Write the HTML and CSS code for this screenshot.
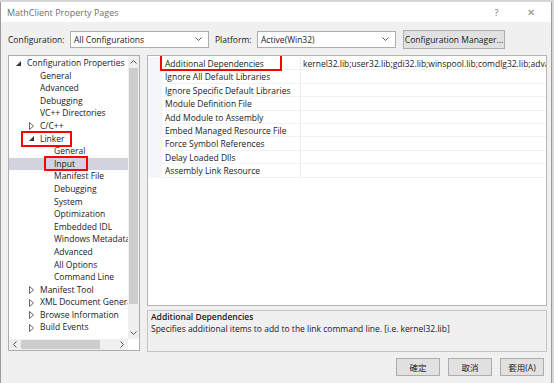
FILE: index.html
```html
<!DOCTYPE html>
<html lang="en">

<head>
    <meta charset="UTF-8">
    <meta name="viewport" content="width=device-width, initial-scale=1.0">
    <title>MathClient Property Pages</title>
    <link rel="stylesheet" href="styles.css">
</head>

<body>
    <div class="desk"></div>
    <div class="window">
        <div class="titlebar">
            <span class="title">MathClient Property Pages</span>
            <span class="help">?</span>
            <span class="close">✕</span>
        </div>

        <div class="config-row">
            <span class="label label-config">Configuration:</span>
            <div class="select">
                <span>All Configurations</span>
                <svg class="chevron" width="7" height="4" viewBox="0 0 7 4"><path d="M0.5 0.5 L3.5 3.5 L6.5 0.5" fill="none" stroke="#444" stroke-width="0.9"/></svg>
            </div>
            <span class="label label-platform">Platform:</span>
            <div class="select">
                <span>Active(Win32)</span>
                <svg class="chevron" width="7" height="4" viewBox="0 0 7 4"><path d="M0.5 0.5 L3.5 3.5 L6.5 0.5" fill="none" stroke="#444" stroke-width="0.9"/></svg>
            </div>
            <button class="btn btn-manager">Configuration Manager...</button>
        </div>

        <div class="main">
            <div class="tree">
                <div class="tree-top">
                    <ul class="tree-list">
                        <li class="lvl0"><span class="exp"><svg width="5" height="5" viewBox="0 0 5 5"><polygon points="5,0 5,5 0,5" fill="#333"/></svg></span>Configuration Properties</li>
                        <li class="lvl1"><span class="exp"></span>General</li>
                        <li class="lvl1"><span class="exp"></span>Advanced</li>
                        <li class="lvl1"><span class="exp"></span>Debugging</li>
                        <li class="lvl1"><span class="exp"></span>VC++ Directories</li>
                        <li class="lvl1"><span class="exp"><svg width="5" height="8" viewBox="0 0 5 8"><polygon points="0.5,0.5 4.5,4 0.5,7.5" fill="none" stroke="#555" stroke-width="0.9"/></svg></span>C/C++</li>
                        <li class="lvl1"><span class="mark mark-linker"><span class="exp"><svg width="5" height="5" viewBox="0 0 5 5"><polygon points="5,0 5,5 0,5" fill="#333"/></svg></span>Linker</span></li>
                        <li class="lvl2"><span class="exp"></span>General</li>
                        <li class="lvl2 selected"><span class="exp"></span><span class="mark mark-input">Input</span></li>
                        <li class="lvl2"><span class="exp"></span>Manifest File</li>
                        <li class="lvl2"><span class="exp"></span>Debugging</li>
                        <li class="lvl2"><span class="exp"></span>System</li>
                        <li class="lvl2"><span class="exp"></span>Optimization</li>
                        <li class="lvl2"><span class="exp"></span>Embedded IDL</li>
                        <li class="lvl2"><span class="exp"></span>Windows Metadata</li>
                        <li class="lvl2"><span class="exp"></span>Advanced</li>
                        <li class="lvl2"><span class="exp"></span>All Options</li>
                        <li class="lvl2"><span class="exp"></span>Command Line</li>
                        <li class="lvl1"><span class="exp"><svg width="5" height="8" viewBox="0 0 5 8"><polygon points="0.5,0.5 4.5,4 0.5,7.5" fill="none" stroke="#555" stroke-width="0.9"/></svg></span>Manifest Tool</li>
                        <li class="lvl1"><span class="exp"><svg width="5" height="8" viewBox="0 0 5 8"><polygon points="0.5,0.5 4.5,4 0.5,7.5" fill="none" stroke="#555" stroke-width="0.9"/></svg></span>XML Document Generator</li>
                        <li class="lvl1"><span class="exp"><svg width="5" height="8" viewBox="0 0 5 8"><polygon points="0.5,0.5 4.5,4 0.5,7.5" fill="none" stroke="#555" stroke-width="0.9"/></svg></span>Browse Information</li>
                        <li class="lvl1"><span class="exp"><svg width="5" height="8" viewBox="0 0 5 8"><polygon points="0.5,0.5 4.5,4 0.5,7.5" fill="none" stroke="#555" stroke-width="0.9"/></svg></span>Build Events</li>
                    </ul>
                    <div class="vscroll">
                        <div class="arrow"><svg width="7" height="4" viewBox="0 0 7 4"><path d="M0.5 3.5 L3.5 0.5 L6.5 3.5" fill="none" stroke="#555" stroke-width="1"/></svg></div>
                        <div class="vthumb"></div>
                        <div class="vtrack"></div>
                        <div class="arrow"><svg width="7" height="4" viewBox="0 0 7 4"><path d="M0.5 0.5 L3.5 3.5 L6.5 0.5" fill="none" stroke="#555" stroke-width="1"/></svg></div>
                    </div>
                </div>
                <div class="hscroll">
                    <div class="harrow"><svg width="4" height="7" viewBox="0 0 4 7"><path d="M3.5 0.5 L0.5 3.5 L3.5 6.5" fill="none" stroke="#555" stroke-width="1"/></svg></div>
                    <div class="hthumb"></div>
                    <div class="htrack"></div>
                    <div class="harrow"><svg width="4" height="7" viewBox="0 0 4 7"><path d="M0.5 0.5 L3.5 3.5 L0.5 6.5" fill="none" stroke="#555" stroke-width="1"/></svg></div>
                    <div class="corner"></div>
                </div>
            </div>

            <div class="right">
                <div class="grid">
                    <div class="prop">
                        <span class="gutter"></span>
                        <span class="name"><span class="mark mark-dep">Additional Dependencies</span></span>
                        <span class="value">kernel32.lib;user32.lib;gdi32.lib;winspool.lib;comdlg32.lib;advapi32.lib;shell32.lib</span>
                    </div>
                    <div class="prop"><span class="gutter"></span><span class="name">Ignore All Default Libraries</span><span class="value"></span></div>
                    <div class="prop"><span class="gutter"></span><span class="name">Ignore Specific Default Libraries</span><span class="value"></span></div>
                    <div class="prop"><span class="gutter"></span><span class="name">Module Definition File</span><span class="value"></span></div>
                    <div class="prop"><span class="gutter"></span><span class="name">Add Module to Assembly</span><span class="value"></span></div>
                    <div class="prop"><span class="gutter"></span><span class="name">Embed Managed Resource File</span><span class="value"></span></div>
                    <div class="prop"><span class="gutter"></span><span class="name">Force Symbol References</span><span class="value"></span></div>
                    <div class="prop"><span class="gutter"></span><span class="name">Delay Loaded Dlls</span><span class="value"></span></div>
                    <div class="prop"><span class="gutter"></span><span class="name">Assembly Link Resource</span><span class="value"></span></div>
                </div>
                <div class="desc">
                    <div class="desc-title">Additional Dependencies</div>
                    <div class="desc-text">Specifies additional items to add to the link command line. [i.e. kernel32.lib]</div>
                </div>
            </div>
        </div>

        <div class="footer">
            <button class="btn btn-foot">確定</button>
            <button class="btn btn-foot">取消</button>
            <button class="btn btn-foot">套用(A)</button>
        </div>
    </div>
</body>

</html>
```

FILE: styles.css
```css
html,
body {
    margin: 0;
    padding: 0;
}

body {
    width: 554px;
    height: 383px;
    overflow: hidden;
    background: #d8d8d8;
    font-family: 'Open Sans', 'Noto Sans CJK TC', sans-serif;
    font-size: 8.5px;
    color: #1a1a1a;
}

.desk {
    height: 2px;
    background: #d6d6d6;
}

.window {
    width: 552px;
    height: 381px;
    box-sizing: border-box;
    border-left: 1px solid #9a9a9a;
    border-right: 1px solid #9a9a9a;
    background: #f0f0f0;
    display: flex;
    flex-direction: column;
}

/* title bar */
.titlebar {
    height: 20px;
    background: #fff;
    display: flex;
    align-items: center;
    padding-left: 6px;
    color: #707070;
    font-size: 9px;
}

.title {
    flex: 1;
}

.help {
    width: 29px;
    text-align: center;
}

.close {
    width: 40px;
    text-align: center;
    font-size: 10px;
    color: #8a8a8a;
}

/* configuration row */
.config-row {
    height: 33px;
    display: flex;
    align-items: center;
    padding-left: 7px;
    padding-top: 1px;
    box-sizing: border-box;
}

.label-config {
    width: 62px;
}

.label-platform {
    width: 42px;
    margin-left: 6px;
}

.select {
    width: 139px;
    height: 17px;
    box-sizing: border-box;
    border: 1px solid #adadad;
    background: #fff;
    display: flex;
    align-items: center;
    justify-content: space-between;
    padding: 0 6px 0 3px;
}

.btn {
    font-family: inherit;
    font-size: inherit;
    color: #1a1a1a;
    background: #e1e1e1;
    border: 1px solid #adadad;
    padding: 0;
    margin: 0;
}

.btn-manager {
    width: 102px;
    height: 19px;
    margin-left: 7px;
}

/* main area */
.main {
    display: flex;
    align-items: flex-start;
    padding-left: 7px;
    gap: 7px;
}

.tree {
    width: 132px;
    height: 296px;
    box-sizing: border-box;
    border: 1px solid #adadad;
    background: #fff;
    display: flex;
    flex-direction: column;
}

.tree-top {
    flex: 1;
    display: flex;
    min-height: 0;
}

.tree-list {
    list-style: none;
    margin: 0;
    padding: 1px 0 0;
    flex: 1;
    overflow: hidden;
}

.tree-list li {
    height: 12.6px;
    line-height: 12.6px;
    white-space: nowrap;
    display: flex;
    align-items: center;
}

.tree-list .lvl0 {
    padding-left: 7px;
}

.tree-list .lvl1 {
    padding-left: 20px;
}

.tree-list .lvl2 {
    padding-left: 34px;
}

.tree-list .selected {
    background: #d2d3de;
}

.exp {
    width: 11px;
    flex: none;
    display: inline-flex;
    align-items: center;
}

.exp svg {
    display: block;
}

.mark {
    position: relative;
    display: inline-flex;
    align-items: center;
}

.mark::after {
    content: '';
    position: absolute;
    border: 2px solid #f00;
}

.mark-linker::after {
    top: -2px;
    bottom: -2px;
    left: -8px;
    right: -7px;
}

.mark-input::after {
    top: -2px;
    bottom: -1px;
    left: -10px;
    right: -13px;
}

.mark-dep::after {
    top: -3px;
    bottom: -1px;
    left: -5px;
    right: -18px;
}

/* scrollbars */
.vscroll {
    width: 11px;
    flex: none;
    display: flex;
    flex-direction: column;
    background: #f0f0f0;
}

.arrow {
    height: 12px;
    display: flex;
    align-items: center;
    justify-content: center;
}

.vthumb {
    height: 236px;
    margin: 0 1px;
    background: #cdcdcd;
}

.vtrack {
    flex: 1;
}

.hscroll {
    height: 11px;
    display: flex;
    background: #f0f0f0;
}

.harrow {
    width: 12px;
    display: flex;
    align-items: center;
    justify-content: center;
}

.hthumb {
    width: 79px;
    margin: 1px 0;
    background: #cdcdcd;
}

.htrack {
    flex: 1;
}

.corner {
    width: 11px;
    background: #fff;
}

/* property grid */
.right {
    width: 400px;
    display: flex;
    flex-direction: column;
    gap: 4px;
}

.grid {
    height: 251px;
    box-sizing: border-box;
    border: 1px solid #b4b4b4;
    background: #fff;
    padding-top: 1px;
    overflow: hidden;
}

.prop {
    display: flex;
    height: 13.4px;
    line-height: 13.4px;
}

.gutter {
    width: 14px;
    flex: none;
    background: #f4f6fa;
}

.name {
    width: 139px;
    flex: none;
    padding-left: 3px;
    box-sizing: border-box;
    border-bottom: 1px solid #f2f2f2;
    border-right: 1px solid #ececec;
    white-space: nowrap;
}

.value {
    flex: 1;
    padding-left: 2px;
    border-bottom: 1px solid #f2f2f2;
    white-space: nowrap;
    overflow: hidden;
}

.desc {
    height: 42px;
    box-sizing: border-box;
    border: 1px solid #c4c4c4;
    padding: 0 3px;
    line-height: 12px;
}

.desc-title {
    font-weight: 600;
}

/* footer */
.footer {
    display: flex;
    justify-content: flex-end;
    gap: 8px;
    padding: 6px 7px 0 0;
}

.btn-foot {
    width: 44px;
    height: 18px;
}
```
